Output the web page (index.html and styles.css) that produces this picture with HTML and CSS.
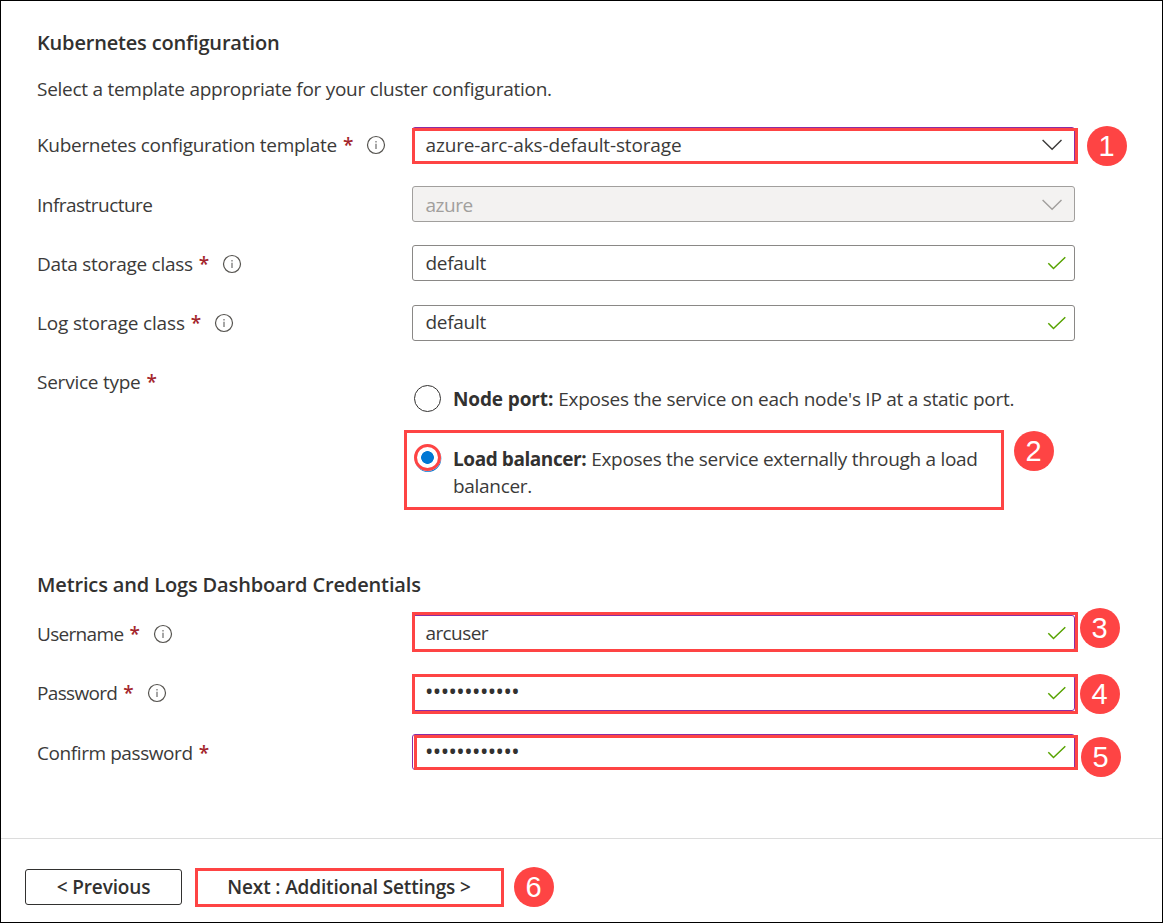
FILE: index.html
```html
<!DOCTYPE html>
<html lang="en">
<head>
<meta charset="utf-8">
<title>Kubernetes configuration</title>
<link rel="stylesheet" href="styles.css">
</head>
<body>
<svg class="defs" aria-hidden="true">
  <symbol id="info" viewBox="0 0 20 20"><circle cx="10" cy="10" r="8.5" fill="none" stroke="#55534f" stroke-width="1.2"/><path d="M10 8.7V14M10 5.9v1.5" stroke="#777" stroke-width="1.3" fill="none"/></symbol>
  <symbol id="check" viewBox="0 0 20 14"><path d="M1.3 7.2l5.2 5.3L18.3 1.2" fill="none" stroke="#57a300" stroke-width="1.5"/></symbol>
  <symbol id="chevron" viewBox="0 0 20 12"><path d="M.6 1l9.5 9.3L19.5 1" fill="none" stroke="currentColor" stroke-width="1.4"/></symbol>
</svg>
<main class="page">
  <section class="form">
    <h2 class="heading">Kubernetes configuration</h2>
    <p class="intro">Select a template appropriate for your cluster configuration.</p>

    <div class="row">
      <div class="label"><span class="t-template">Kubernetes configuration template</span><b class="req">*</b><svg class="info"><use href="#info"/></svg></div>
      <div class="field edited"><span class="v-template">azure-arc-aks-default-storage</span><svg class="chevron"><use href="#chevron"/></svg><i class="mark m1"></i><b class="badge b1">1</b></div>
    </div>
    <div class="row">
      <div class="label low"><span class="t-infra">Infrastructure</span></div>
      <div class="field disabled"><span class="v-azure">azure</span><svg class="chevron"><use href="#chevron"/></svg></div>
    </div>
    <div class="row">
      <div class="label low"><span class="t-data">Data storage class</span><b class="req">*</b><svg class="info"><use href="#info"/></svg></div>
      <div class="field"><span class="v-default">default</span><svg class="check"><use href="#check"/></svg></div>
    </div>
    <div class="row row-log">
      <div class="label"><span class="t-log">Log storage class</span><b class="req">*</b><svg class="info"><use href="#info"/></svg></div>
      <div class="field"><span class="v-default high">default</span><svg class="check"><use href="#check"/></svg></div>
    </div>
    <div class="row row-service">
      <div class="label"><span class="t-service">Service type</span><b class="req">*</b></div>
      <div class="options">
        <div class="option"><i class="radio"></i><p><b class="o-node">Node port:</b> <span class="o-node-text">Exposes the service on each node's IP at a static port.</span></p></div>
        <div class="option chosen"><i class="radio on"></i><p><b class="o-load">Load balancer:</b> <span class="o-load-text">Exposes the service externally through a load<br>balancer.</span></p><i class="mark m2"></i><b class="badge b2">2</b></div>
      </div>
    </div>

    <h2 class="heading heading-metrics">Metrics and Logs Dashboard Credentials</h2>
    <div class="row row-user">
      <div class="label low"><span class="t-user">Username</span><b class="req">*</b><svg class="info"><use href="#info"/></svg></div>
      <div class="field edited"><span class="v-user">arcuser</span><svg class="check"><use href="#check"/></svg><i class="mark m3"></i><b class="badge b3">3</b></div>
    </div>
    <div class="row">
      <div class="label"><span class="t-pass">Password</span><b class="req">*</b><svg class="info"><use href="#info"/></svg></div>
      <div class="field edited"><span class="dots high">••••••••••••</span><svg class="check"><use href="#check"/></svg><i class="mark m4"></i><b class="badge b4">4</b></div>
    </div>
    <div class="row">
      <div class="label low"><span class="t-confirm">Confirm password</span><b class="req">*</b></div>
      <div class="field edited"><span class="dots">••••••••••••</span><svg class="check"><use href="#check"/></svg><i class="mark m5"></i><b class="badge b5">5</b></div>
    </div>
  </section>
  <footer class="footer">
    <button class="button">&lt; Previous</button>
    <button class="button next">Next : Additional Settings &gt;</button>
    <b class="badge">6</b>
  </footer>
</main>
</body>
</html>
```
FILE: styles.css
```css
* { box-sizing: border-box; }
body { margin: 0; background: #fff; color: #3b3a39; font: 19px/26px "Open Sans", "Noto Sans", sans-serif; }
.defs { position: absolute; width: 0; height: 0; }
.page { display: flex; flex-direction: column; width: 1163px; height: 923px; border: 1px solid #000; overflow: hidden; }
.form { flex: 0 0 837px; padding: 29px 0 0 36px; }
.heading { margin: 0; color: #323130; font-size: 20px; font-weight: 600; line-height: 26px; letter-spacing: -.18px; }
.intro { margin: 20px 0 25px; letter-spacing: -.27px; }
.row { display: grid; grid-template-columns: 375px 663px; height: 36px; margin-bottom: 23px; white-space: nowrap; }
.row-log { margin-top: 24px; }
.row-user { margin-bottom: 24px; }
.label { display: flex; align-items: center; }
.low { padding-top: 2px; }
.high { padding-bottom: 2px; }
.t-template { letter-spacing: -.3px; }
.t-infra { letter-spacing: -.53px; }
.t-data { letter-spacing: -.27px; }
.t-log { letter-spacing: -.17px; }
.t-service { letter-spacing: -.24px; }
.t-user { letter-spacing: -.68px; }
.t-pass { letter-spacing: -.68px; }
.t-confirm { letter-spacing: -.42px; }
.req { margin-left: 6px; color: #a4262c; font-weight: 600; }
.info { width: 20px; height: 20px; margin-left: 13px; }
.field { position: relative; display: flex; align-items: center; justify-content: space-between; height: 36px; padding: 0 7px 0 12.5px; border: 1px solid #8a8886; border-radius: 3px; }
.edited { border-color: #8a2da5; }
.disabled { padding-top: 1px; border-color: #a19f9d; background: #f3f2f1; color: #a19f9d; }
.v-template { letter-spacing: -.14px; }
.v-azure { padding-top: 1px; letter-spacing: -.45px; }
.v-default { letter-spacing: -.3px; }
.v-user { letter-spacing: -.6px; }
.check { width: 20px; height: 14px; }
.chevron { width: 20px; height: 12px; margin-right: 5px; }
.dots { padding-left: .5px; color: #323130; font: 700 17px/26px "Open Sans", sans-serif; letter-spacing: 1.45px; }
.mark { position: absolute; border: 3px solid #fe4444; }
.m1 { left: -1px; top: 0; width: 666px; height: 36px; }
.m2 { left: -8px; top: -14px; width: 600px; height: 80px; }
.m3 { left: -1px; top: -4px; width: 666px; height: 40px; }
.m4 { left: -1px; top: -2px; width: 666px; height: 40px; }
.m5 { left: 1px; top: 0; width: 664px; height: 35px; }
.badge { width: 40px; height: 40px; padding-right: 1px; border-radius: 50%; background: #fe4444; color: #fff; font: 29px/41px "Liberation Sans", Arial, sans-serif; text-align: center; }
.field .badge, .option .badge { position: absolute; }
.b1 { left: 674px; top: -2px; }
.b2 { left: 602px; top: -13px; }
.b3 { left: 667px; top: -8px; }
.b4 { left: 667px; top: -2px; }
.b5 { left: 668px; top: 2px; }
.row-service { height: 147px; margin-bottom: 61px; }
.row-service .label { height: 36px; }
.options { padding-top: 21px; }
.option { position: relative; display: flex; gap: 12px; padding-left: 2px; height: 59px; }
.option p { margin: 0; padding-top: 1px; line-height: 27px; }
.option.chosen p { padding-top: 2px; }
.option b { color: #323130; }
.option .badge { color: #fff; }
.o-node { letter-spacing: -.12px; }
.o-node-text { letter-spacing: -.26px; }
.o-load { letter-spacing: -.43px; }
.o-load-text { letter-spacing: -.3px; }
.radio { width: 27px; height: 27px; border: 1.3px solid #323130; border-radius: 50%; }
.on { border: 3px solid #fe4444; background: radial-gradient(circle, #0078d4 6px, #fff 6.7px); box-shadow: .5px 1px 0 -.2px #0078d4; }
.heading-metrics { margin-bottom: 17px; letter-spacing: -.14px; }
.footer { display: flex; flex: 1; align-items: flex-start; border-top: 1px solid #dcdcdc; padding: 28px 24px 0; }
.button { width: 157px; height: 36px; margin-top: 2px; padding: 0; border: 1px solid #323130; border-radius: 3px; background: #fff; color: #323130; font: 600 19px/26px "Open Sans", sans-serif; letter-spacing: -.15px; }
.next { width: 309px; height: 39px; margin: 1px 10px 0 13px; padding: 0 1px 2px 0; border: 3px solid #fe4444; border-radius: 0; }
```
